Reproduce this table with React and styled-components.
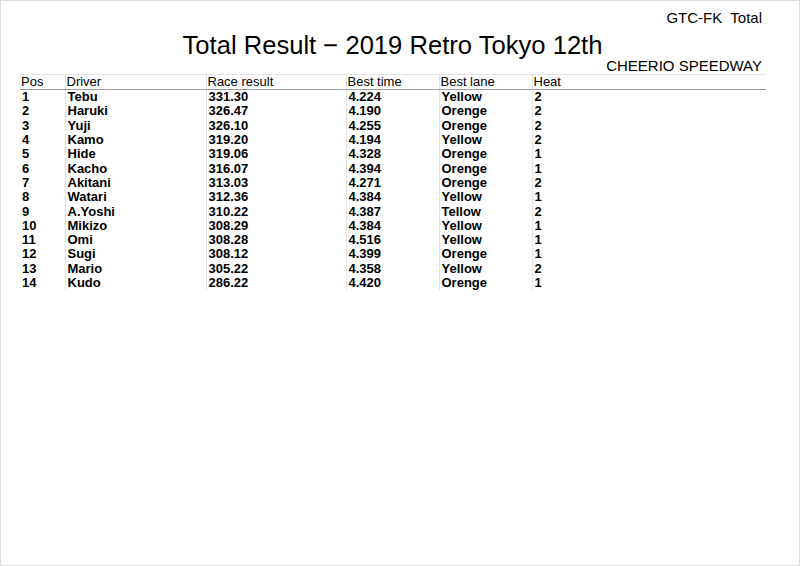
import React from 'react'
import styled, { createGlobalStyle } from 'styled-components'

const GlobalStyle = createGlobalStyle`
  html, body {
    margin: 0;
    padding: 0;
    background: #fff;
  }
  body {
    font-family: "Liberation Sans", "Noto Sans CJK JP", sans-serif;
    color: #000;
  }
`

const Page = styled.div`
  box-sizing: border-box;
  width: 800px;
  height: 566px;
  border: 1px solid #dcdcdc;
  padding: 8px 34px 0 19px;
  display: flex;
  flex-direction: column;
`

const Corner = styled.div`
  align-self: flex-end;
  font-size: 15px;
  line-height: 18px;
  white-space: pre;
  margin-right: 3px;
`

const Title = styled.h1`
  margin: 3px 0 0;
  font-size: 25.6px;
  font-weight: 400;
  line-height: 30px;
  text-align: center;
`

const Venue = styled.div`
  align-self: flex-end;
  font-size: 15px;
  line-height: 16px;
  margin: -2px 3px 0 0;
`

const Table = styled.table`
  border-collapse: collapse;
  table-layout: fixed;
  width: 746px;
  margin-top: 0;
  font-size: 13px;
`

const Col = styled.col`
  width: ${({ w }) => w}px;
`

const Head = styled.th`
  text-align: left;
  font-weight: 400;
  height: 14px;
  line-height: 14px;
  padding: 0 0 0 1px;
  border-top: 1px solid #e4e4e4;
  border-bottom: 1px solid #9a9a9a;
  border-left: ${({ first }) => (first ? 'none' : '1px solid #e2e2e2')};
`

const Cell = styled.td`
  font-weight: 700;
  height: 14.3px;
  line-height: 14px;
  padding: 0 0 0 2px;
  white-space: nowrap;
  border-left: ${({ first }) => (first ? 'none' : '1px solid #e2e2e2')};
`

const widths = [45, 141, 140, 93, 93, 234]
const headers = ['Pos', 'Driver', 'Race result', 'Best time', 'Best lane', 'Heat']

const rows = [
  [1, 'Tebu', '331.30', '4.224', 'Yellow', 2],
  [2, 'Haruki', '326.47', '4.190', 'Orenge', 2],
  [3, 'Yuji', '326.10', '4.255', 'Orenge', 2],
  [4, 'Kamo', '319.20', '4.194', 'Yellow', 2],
  [5, 'Hide', '319.06', '4.328', 'Orenge', 1],
  [6, 'Kacho', '316.07', '4.394', 'Orenge', 1],
  [7, 'Akitani', '313.03', '4.271', 'Orenge', 2],
  [8, 'Watari', '312.36', '4.384', 'Yellow', 1],
  [9, 'A.Yoshi', '310.22', '4.387', 'Tellow', 2],
  [10, 'Mikizo', '308.29', '4.384', 'Yellow', 1],
  [11, 'Omi', '308.28', '4.516', 'Yellow', 1],
  [12, 'Sugi', '308.12', '4.399', 'Orenge', 1],
  [13, 'Mario', '305.22', '4.358', 'Yellow', 2],
  [14, 'Kudo', '286.22', '4.420', 'Orenge', 1]
]

const App = () => (
  <>
    <GlobalStyle />
    <Page>
      <Corner>{'GTC-FK  Total'}</Corner>
      <Title>Total Result − 2019 Retro Tokyo 12th</Title>
      <Venue>CHEERIO SPEEDWAY</Venue>
      <Table>
        <colgroup>
          {widths.map((w, i) => <Col key={i} w={w} />)}
        </colgroup>
        <thead>
          <tr>
            {headers.map((h, i) => <Head key={h} first={i === 0}>{h}</Head>)}
          </tr>
        </thead>
        <tbody>
          {rows.map(row => (
            <tr key={row[0]}>
              {row.map((v, i) => <Cell key={i} first={i === 0}>{v}</Cell>)}
            </tr>
          ))}
        </tbody>
      </Table>
    </Page>
  </>
)

export default App
